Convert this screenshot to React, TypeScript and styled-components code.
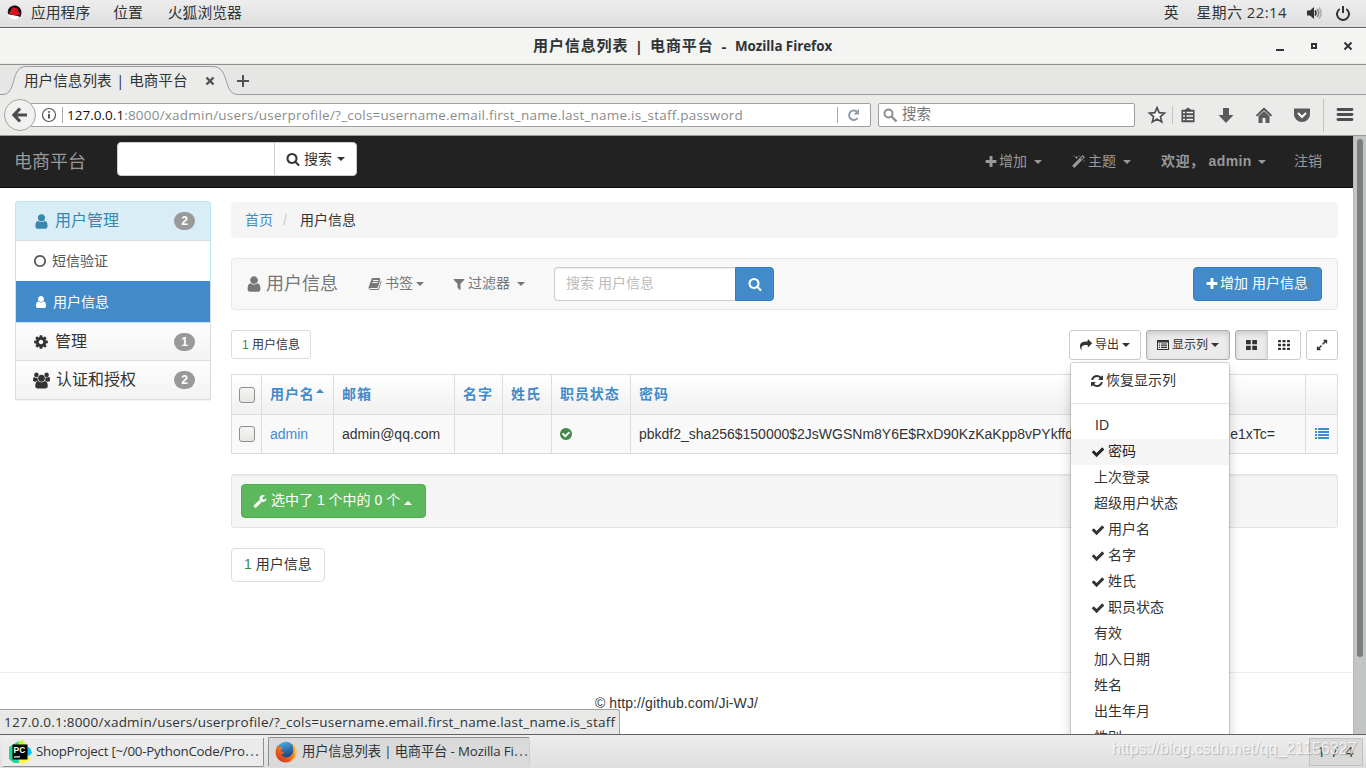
import React from "react";
import styled, { createGlobalStyle, css } from "styled-components";

const UI = `"Open Sans", "Noto Sans", "Noto Sans CJK SC", sans-serif`;
const WEB = `"Liberation Sans", "Noto Sans CJK SC", sans-serif`;

const Global = createGlobalStyle`
  *, *::before, *::after { box-sizing: border-box; }
  html, body, #root { margin: 0; padding: 0; width: 1366px; height: 768px; overflow: hidden; }
  body { background: #fff; }
`;

/* ---------- icons ---------- */

const icons = {
  user: "M1536 1399q0 109-62.5 187t-150.5 78h-854q-88 0-150.5-78t-62.5-187q0-85 8.5-160.5t31.5-152 58.5-131 94-89 134.5-34.5q131 128 313 128t313-128q76 0 134.5 34.5t94 89 58.5 131 31.5 152 8.5 160.5zm-256-887q0 159-112.5 271.5t-271.5 112.5-271.5-112.5-112.5-271.5 112.5-271.5 271.5-112.5 271.5 112.5 112.5 271.5z",
  search: "M1216 832q0-185-131.5-316.5t-316.5-131.5-316.5 131.5-131.5 316.5 131.5 316.5 316.5 131.5 316.5-131.5 131.5-316.5zm512 832q0 52-38 90t-90 38q-54 0-90-38l-343-342q-179 124-399 124-143 0-273.5-55.5t-225-150-150-225-55.5-273.5 55.5-273.5 150-225 225-150 273.5-55.5 273.5 55.5 225 150 150 225 55.5 273.5q0 220-124 399l343 343q37 37 37 90z",
  plus: "M1600 736v192q0 40-28 68t-68 28h-416v416q0 40-28 68t-68 28h-192q-40 0-68-28t-28-68v-416h-416q-40 0-68-28t-28-68v-192q0-40 28-68t68-28h416v-416q0-40 28-68t68-28h192q40 0 68 28t28 68v416h416q40 0 68 28t28 68z",
  magic: "M1190 581l293-293-107-107-293 293zm447-293q0 27-18 45l-1286 1286q-18 18-45 18t-45-18l-198-198q-18-18-18-45t18-45l1286-1286q18-18 45-18t45 18l198 198q18 18 18 45zm-1351-190l98 30-98 30-30 98-30-98-98-30 98-30 30-98zm350 162l196 60-196 60-60 196-60-196-196-60 196-60 60-196zm930 478l98 30-98 30-30 98-30-98-98-30 98-30 30-98zm-640-640l98 30-98 30-30 98-30-98-98-30 98-30 30-98z",
  book: "M1703 478q40 57 18 129l-275 906q-19 64-76.5 107.5t-122.5 43.5h-923q-77 0-148.5-53.5t-99.5-131.5q-24-67-2-127 0-4 3-27t4-37q1-8-3-21.5t-3-19.5q2-11 8-21t16.5-23.5 16.5-23.5q23-38 45-91.5t30-91.5q3-10 .5-30t-.5-28q3-11 17-28t17-23q21-36 42-92t25-90q1-9-2.5-32t.5-28q4-13 22-30.5t22-22.5q19-26 42.5-84.5t27.5-96.5q1-8-3-25.5t-2-26.5q2-8 9-18t18-23 17-21q8-12 16.5-30.5t15-35 16-36 19.5-32 26.5-23.5 36-11.5 47.5 5.5l-1 3q38-9 51-9h761q74 0 114 56t18 130l-274 906q-36 119-71.5 153.5t-128.5 34.5h-869q-27 0-38 15-11 16-1 43 24 70 144 70h923q29 0 56-15.5t35-41.5l300-987q7-22 5-57 38 15 59 43zm-1064 2q-4 13 2 22.5t20 9.5h608q13 0 25.5-9.5t16.5-22.5l21-64q4-13-2-22.5t-20-9.5h-608q-13 0-25.5 9.5t-16.5 22.5zm-83 256q-4 13 2 22.5t20 9.5h608q13 0 25.5-9.5t16.5-22.5l21-64q4-13-2-22.5t-20-9.5h-608q-13 0-25.5 9.5t-16.5 22.5z",
  filter: "M1595 295q17 41-14 70l-493 493v742q0 42-39 59-13 5-25 5-27 0-45-19l-256-256q-19-19-19-45v-486l-493-493q-31-29-14-70 17-39 59-39h1280q42 0 59 39z",
  check: "M1671 566q0 40-28 68l-724 724-136 136q-28 28-68 28t-68-28l-136-136-362-362q-28-28-28-68t28-68l136-136q28-28 68-28t68 28l294 295 656-657q28-28 68-28t68 28l136 136q28 28 28 68z",
  checkCircle: "M1412 734q0-28-18-46l-91-90q-19-19-45-19t-45 19l-408 407-226-226q-19-19-45-19t-45 19l-91 90q-18 18-18 46 0 27 18 45l362 362q19 19 45 19 27 0 46-19l543-543q18-18 18-45zm252 162q0 209-103 385.5t-279.5 279.5-385.5 103-385.5-103-279.5-279.5-103-385.5 103-385.5 279.5-279.5 385.5-103 385.5 103 279.5 279.5 103 385.5z",
  circle: "M896 352q-148 0-273 73t-198 198-73 273 73 273 198 198 273 73 273-73 198-198 73-273-73-273-198-198-273-73zm768 544q0 209-103 385.5t-279.5 279.5-385.5 103-385.5-103-279.5-279.5-103-385.5 103-385.5 279.5-279.5 385.5-103 385.5 103 279.5 279.5 103 385.5z",
  cog: "M1152 896q0-106-75-181t-181-75-181 75-75 181 75 181 181 75 181-75 75-181zm512-109v222q0 12-8 23t-20 13l-185 28q-19 54-39 91 35 50 107 138 10 12 10 25t-9 23q-27 37-99 108t-94 71q-12 0-26-9l-138-108q-44 23-91 38-16 136-29 186-7 28-36 28h-222q-14 0-24.5-8.5t-11.5-21.5l-28-184q-49-16-90-37l-141 107q-10 9-25 9-14 0-25-11-126-114-165-168-7-10-7-23 0-12 8-23 15-21 51-66.5t54-70.5q-27-50-41-99l-183-27q-13-2-21-12.5t-8-23.5v-222q0-12 8-23t19-13l186-28q14-46 39-92-40-57-107-138-10-12-10-24 0-10 9-23 26-36 98.5-107.5t94.5-71.5q13 0 26 10l138 107q44-23 91-38 16-136 29-186 7-28 36-28h222q14 0 24.5 8.5t11.5 21.5l28 184q49 16 90 37l142-107q9-9 24-9 13 0 25 10 129 119 165 170 7 8 7 22 0 12-8 23-15 21-51 66.5t-54 70.5q26 50 41 98l183 28q13 2 21 12.5t8 23.5z",
  users: "M593 896q-162 5-265 128h-134q-82 0-138-40.5t-56-118.5q0-353 124-353 6 0 43.5 21t97.5 42.5 119 21.500q67 0 133-23-5 37-5 66 0 159 93 293zm1071 637q0 120-73 189.5t-194 69.5h-874q-121 0-194-69.5t-73-189.5q0-53 3.5-103.5t14-109 26.5-108.5 43-97.5 62-81 85.5-53.5 111.5-20q10 0 43 21.5t73 48 107 48 135 21.5 135-21.5 107-48 73-48 43-21.5q61 0 111.5 20t85.5 53.5 62 81 43 97.5 26.5 108.5 14 109 3.5 103.5zm-1024-1277q0 106-75 181t-181 75-181-75-75-181 75-181 181-75 181 75 75 181zm704 384q0 159-112.5 271.5t-271.5 112.5-271.5-112.5-112.5-271.5 112.5-271.5 271.5-112.5 271.5 112.5 112.5 271.5zm576 225q0 78-56 118.5t-138 40.5h-134q-103-123-265-128 93-134 93-293 0-29-5-66 66 23 133 23 59 0 119-21.5t97.5-42.5 43.5-21q124 0 124 353zm-128-609q0 106-75 181t-181 75-181-75-75-181 75-181 181-75 181 75 75 181z",
  share: "M1792 640q0 26-19 45l-512 512q-19 19-45 19t-45-19-19-45v-256h-224q-98 0-175.5 6t-154 21.5-133 42.5-105.5 69.5-80 101-48.5 138.5-17.5 181q0 55 5 123 0 6 2.5 23.5t2.5 26.5q0 15-8.5 25t-23.5 10q-16 0-28-17-7-9-13-22t-13.5-30-10.5-24q-127-285-127-451 0-199 53-333 162-403 875-403h224v-256q0-26 19-45t45-19 45 19l512 512q19 19 19 45z",
  refresh: "M1639 1056q0 5-1 7-64 268-268 434.5t-478 166.5q-146 0-282.5-55t-243.5-157l-129 129q-19 19-45 19t-45-19-19-45v-448q0-26 19-45t45-19h448q26 0 45 19t19 45-19 45l-137 137q71 66 161 102t187 36q134 0 250-65t186-179q11-17 53-117 8-23 30-23h192q13 0 22.5 9.5t9.5 22.5zm25-800v448q0 26-19 45t-45 19h-448q-26 0-45-19t-19-45 19-45l138-138q-148-137-349-137-134 0-250 65t-186 179q-11 17-53 117-8 23-30 23h-199q-13 0-22.5-9.5t-9.5-22.5v-7q65-268 270-434.5t480-166.5q146 0 284 55.5t245 156.5l130-129q19-19 45-19t45 19 19 45z",
  wrench: "M448 1472q0-26-19-45t-45-19-45 19-19 45 19 45 45 19 45-19 19-45zm644-420l-682 682q-37 37-90 37-52 0-91-37l-106-108q-38-36-38-90 0-53 38-91l681-681q39 98 114.5 173.5t173.5 114.5zm634-435q0 39-23 106-47 134-164.5 217.5t-258.5 83.5q-185 0-316.5-131.5t-131.5-316.5 131.5-316.5 316.5-131.5q58 0 121.5 16.5t107.5 46.5q16 11 16 28t-16 28l-293 169v224l193 107q5-3 79-48.5t135.5-81 70.5-35.5q15 0 23.5 10t8.5 25z",
  expand: "M883 1056q0 13-10 23l-332 332 144 144q19 19 19 45t-19 45-45 19h-448q-26 0-45-19t-19-45v-448q0-26 19-45t45-19 45 19l144 144 332-332q10-10 23-10t23 10l114 114q10 10 10 23zm781-864v448q0 26-19 45t-45 19-45-19l-144-144-332 332q-10 10-23 10t-23-10l-114-114q-10-10-10-23t10-23l332-332-144-144q-19-19-19-45t19-45 45-19h448q26 0 45 19t19 45z",
};

const IconSvg = styled.svg<{ $ml?: number; $mr?: number }>`
  display: block;
  flex: none;
  fill: currentColor;
  overflow: visible;
  margin-left: ${(p) => p.$ml ?? 0}px;
  margin-right: ${(p) => p.$mr ?? 4}px;
`;

type IconProps = { name: keyof typeof icons; size?: number; box?: string; ml?: number; mr?: number };
const Icon = ({ name, size = 14, box = "0 0 1792 1792", ml, mr }: IconProps) => (
  <IconSvg width={size} height={size} viewBox={box} $ml={ml} $mr={mr}>
    <path d={icons[name]} />
  </IconSvg>
);

const Caret = styled.i<{ $ml?: number; $up?: boolean; $lift?: number }>`
  flex: none;
  width: 0;
  height: 0;
  margin-left: ${(p) => p.$ml ?? 4}px;
  margin-bottom: ${(p) => p.$lift ?? 0}px;
  border: 4px solid transparent;
  ${(p) =>
    p.$up
      ? css`border-top: 0; border-bottom-color: currentColor;`
      : css`border-bottom: 0; border-top-color: currentColor;`}
`;

/* Rows whose label sits one pixel above the centre line of its icon. */
const raisedLabel = css`
  padding-bottom: 2px;
  > svg, > i { position: relative; top: 1px; }
`;

/* ---------- desktop panel ---------- */

const Screen = styled.div`
  width: 1366px;
  height: 768px;
  display: flex;
  flex-direction: column;
  overflow: hidden;
  font-family: ${UI};
  color: #2e3436;
`;

const Panel = styled.header`
  flex: none;
  height: 28px;
  display: flex;
  align-items: center;
  padding: 0 15px 2px 7px;
  border-bottom: 1px solid #606261;
  background: linear-gradient(#ededed, #dedede);
  font-size: 14.8px;
  line-height: 25px;
`;

const PanelText = styled.span<{ $ml: number; $ls?: number }>`
  margin-left: ${(p) => p.$ml}px;
  letter-spacing: ${(p) => p.$ls ?? 0}px;
  white-space: nowrap;
`;

const Spacer = styled.div`
  flex: 1;
`;

const TitleBar = styled.div`
  flex: none;
  height: 37px;
  display: flex;
  align-items: center;
  padding: 0 13px 0 533px;
  border-bottom: 1px solid #8e908e;
  background: #f4f4f3;
  box-shadow: inset 0 1px #fff, inset 0 -1px #e8e8e6;
  white-space: pre;
  font-weight: 700;
`;

const TitleCjk = styled.span<{ $w: number }>`
  width: ${(p) => p.$w}px;
  font-size: 15px;
  letter-spacing: 0.9px;
  line-height: 34px;
  padding-bottom: 2px;
`;

const TitleSeparator = styled.span<{ $w: number }>`
  width: ${(p) => p.$w}px;
  font-size: 15px;
  text-align: center;
`;

const TitleLatin = styled.span`
  font-size: 13.4px;
  letter-spacing: -0.05px;
`;

const WindowButtons = styled.svg`
  display: block;
`;

/* ---------- browser chrome ---------- */

const TabStrip = styled.div`
  flex: none;
  height: 30px;
  display: flex;
  position: relative;
  background: #e6e6e4;
`;

const TabShape = styled.svg`
  position: absolute;
  inset: 0;
`;

const TabLabel = styled.div`
  position: relative;
  width: 181px;
  padding-left: 24px;
  font-size: 14.6px;
  line-height: 30px;
  word-spacing: 1px;
  white-space: pre;
`;

const TabIcons = styled.svg`
  position: relative;
  margin: 9px 0 0 24px;
`;

const NavBar = styled.div`
  flex: none;
  height: 41px;
  display: flex;
  align-items: center;
  padding: 0 0 1px 4px;
  border-bottom: 1px solid #989a98;
  background: #ebebe9;
`;

const BackButton = styled.div`
  flex: none;
  width: 32px;
  height: 32px;
  margin-right: -6px;
  position: relative;
  z-index: 1;
  display: grid;
  place-items: center;
  border: 1px solid #a2a4a2;
  border-radius: 50%;
  background: #f1f1f0;
`;

const Field = styled.div<{ $w: number; $ml?: number }>`
  flex: none;
  width: ${(p) => p.$w}px;
  margin-left: ${(p) => p.$ml ?? 0}px;
  height: 24px;
  display: flex;
  align-items: center;
  border: 1px solid #9fa19f;
  border-radius: 2px;
  background: #fff;
  font-size: 13.5px;
  white-space: nowrap;
`;

const Url = styled.span`
  margin-left: 4px;
  color: #8a8c8c;
  letter-spacing: 0.22px;
  b { font-weight: 400; color: #111; letter-spacing: 0.02px; }
`;

const SearchHint = styled.span`
  margin-left: 5px;
  padding-bottom: 2px;
  font-size: 14.5px;
  line-height: 20px;
  color: #777;
`;

const FieldRule = styled.i<{ $ml: number; $h?: number }>`
  width: 1px;
  height: ${(p) => p.$h ?? 16}px;
  margin-left: ${(p) => p.$ml}px;
  background: #aaa;
`;

const ToolbarIcons = styled.svg`
  flex: none;
  margin-left: 5px;
`;

/* ---------- web page ---------- */

const Viewport = styled.div`
  flex: none;
  height: 598px;
  display: flex;
  position: relative;
  overflow: hidden;
  background: #fff;
`;

const Page = styled.div`
  width: 1353px;
  display: flex;
  flex-direction: column;
  font-family: ${WEB};
  font-size: 14px;
  line-height: 20px;
  color: #333;
`;

const ScrollTrack = styled.div`
  width: 13px;
  padding: 3px 3px 0 4px;
  background: #c3c5c4;
  box-shadow: inset 1px 0 #b6b8b7;
`;

const ScrollThumb = styled.div`
  height: 518px;
  border-radius: 3px;
  background: #7b7d7e;
`;

const TopNav = styled.nav`
  flex: none;
  height: 52px;
  display: flex;
  align-items: center;
  padding: 0 15px 0 14px;
  border-bottom: 1px solid #080808;
  background: #222;
  color: #999;
`;

const Brand = styled.div`
  width: 103px;
  font-size: 18px;
`;

const NavSearch = styled.div`
  width: 240px;
  height: 34px;
  margin-top: -5px;
  display: flex;
  border: 1px solid #ccc;
  border-radius: 4px;
  background: #fff;
  color: #333;
`;

const NavSearchInput = styled.div`
  width: 157px;
  border-right: 1px solid #ccc;
`;

const NavSearchButton = styled.div`
  flex: 1;
  display: flex;
  align-items: center;
  padding-left: 11px;
`;

const NavItem = styled.div<{ $w: number; $bold?: boolean }>`
  width: ${(p) => p.$w}px;
  display: flex;
  align-items: center;
  padding-left: ${(p) => (p.$bold ? 15 : 14)}px;
  white-space: pre;
  font-weight: ${(p) => (p.$bold ? 700 : 400)};
  letter-spacing: ${(p) => (p.$bold ? 0.4 : 0)}px;
  ${raisedLabel}
`;

const Columns = styled.div`
  flex: none;
  height: 484px;
  display: flex;
  gap: 20px;
  padding: 13px 15px 0;
`;

const Sidebar = styled.aside`
  width: 196px;
  height: 199px;
  border: 1px solid #ddd;
  border-radius: 4px 4px 0 0;
  box-shadow: 0 1px 1px rgba(0, 0, 0, 0.05);
`;

const SideHead = styled.div<{ $h: number; $info?: boolean; $top?: string }>`
  height: ${(p) => p.$h}px;
  display: flex;
  align-items: center;
  padding: 0 15px 0 17px;
  border-top: ${(p) => (p.$top ? `1px solid ${p.$top}` : 0)};
  background: ${(p) => (p.$info ? "#d9edf7" : "linear-gradient(#fdfdfd, #f3f3f3)")};
  color: ${(p) => (p.$info ? "#3a87ad" : "#333")};
  font-size: 16px;
  ${(p) =>
    p.$info &&
    css`
      margin: -1px -1px 0;
      padding: 0 15px 0 17px;
      border: 1px solid #bce8f1;
      border-bottom: 0;
      border-radius: 4px 4px 0 0;
    `}
`;

const Badge = styled.span`
  width: 21px;
  height: 18px;
  margin-left: auto;
  border-radius: 9px;
  background: #999;
  color: #fff;
  font-size: 12px;
  font-weight: 700;
  line-height: 18px;
  text-align: center;
`;

const SideItem = styled.div<{ $active?: boolean }>`
  height: 41px;
  display: flex;
  align-items: center;
  padding-left: 17px;
  border-top: ${(p) => (p.$active ? 0 : "1px solid #ddd")};
  margin: 0 ${(p) => (p.$active ? 0 : -1)}px;
  ${(p) => !p.$active && css`border-left: 1px solid #bce8f1; border-right: 1px solid #bce8f1;`}
  background: ${(p) => (p.$active ? "#428bca" : "#fff")};
  color: ${(p) => (p.$active ? "#fff" : "#555")};
`;

const Main = styled.main`
  width: 1107px;
  padding-top: 1px;
`;

const Breadcrumb = styled.div`
  height: 36px;
  display: flex;
  align-items: center;
  padding: 0 14px 1px;
  border-radius: 4px;
  background: #f5f5f5;
  white-space: pre;
`;

const Link = styled.span`
  color: #428bca;
`;

const Slash = styled.span`
  width: 27px;
  padding-left: 10px;
  color: #ccc;
`;

const ModelBar = styled.div`
  height: 52px;
  margin-top: 20px;
  display: flex;
  align-items: center;
  padding: 0 15px 0 14px;
  border: 1px solid #e7e7e7;
  border-radius: 4px;
  background: #f8f8f8;
  color: #777;
`;

const ModelTitle = styled.div`
  width: 122px;
  display: flex;
  align-items: center;
  margin-left: -1px;
  margin-right: 1px;
  font-size: 18px;
`;

const ModelItem = styled.div<{ $w: number }>`
  width: ${(p) => p.$w}px;
  display: flex;
  align-items: center;
  ${raisedLabel}
`;

const ModelSearch = styled.div`
  width: 181px;
  height: 34px;
  padding: 5px 11px;
  border: 1px solid #ccc;
  border-right: 0;
  border-radius: 4px 0 0 4px;
  background: #fff;
  box-shadow: inset 0 1px 1px rgba(0, 0, 0, 0.075);
  color: #bbb;
  white-space: pre;
`;

const Primary = styled.div<{ $w: number; $joined?: boolean }>`
  width: ${(p) => p.$w}px;
  height: 34px;
  display: flex;
  align-items: center;
  padding-left: 11px;
  border: 1px solid #357ebd;
  border-radius: ${(p) => (p.$joined ? "0 4px 4px 0" : "4px")};
  background: #428bca;
  color: #fff;
  white-space: pre;
  ${raisedLabel}
`;

const Actions = styled.div`
  height: 30px;
  margin-top: 20px;
  display: flex;
  align-items: flex-start;
`;

const Count = styled.div<{ $large?: boolean }>`
  width: ${(p) => (p.$large ? 94 : 80)}px;
  height: ${(p) => (p.$large ? 34 : 29)}px;
  margin-top: ${(p) => (p.$large ? 20 : 0)}px;
  padding-left: ${(p) => (p.$large ? 12 : 10)}px;
  border: 1px solid #ddd;
  border-radius: ${(p) => (p.$large ? 4 : 3)}px;
  font-size: ${(p) => (p.$large ? 14 : 12)}px;
  line-height: ${(p) => (p.$large ? 31 : 29)}px;
  background: #fff;
  white-space: pre;
  b { font-weight: 400; color: #468847; }
`;

const SmallButton = styled.div<{ $w: number; $ml?: number; $on?: boolean; $edge?: "left" | "right" }>`
  position: relative;
  width: ${(p) => p.$w}px;
  height: 30px;
  margin-left: ${(p) => p.$ml ?? 5}px;
  display: flex;
  align-items: center;
  padding-left: 10px;
  border: 1px solid ${(p) => (p.$on ? "#adadad" : "#ccc")};
  border-radius: ${(p) => (p.$edge === "left" ? "3px 0 0 3px" : p.$edge === "right" ? "0 3px 3px 0" : "3px")};
  background: ${(p) => (p.$on ? "#ebebeb" : "#fff")};
  box-shadow: ${(p) => (p.$on ? "inset 0 3px 5px rgba(0,0,0,.125)" : "none")};
  font-size: 12px;
  color: #333;
`;

const Menu = styled.div`
  position: absolute;
  z-index: 5;
  top: 31px;
  left: -77px;
  width: 160px;
  height: 420px;
  padding: 5px 0;
  border: 1px solid rgba(0, 0, 0, 0.15);
  border-radius: 4px;
  background: #fff;
  background-clip: padding-box;
  box-shadow: 0 6px 12px rgba(0, 0, 0, 0.175);
  font-size: 14px;
  line-height: 20px;
`;

const MenuItem = styled.div<{ $hot?: boolean; $pad?: number }>`
  height: 26px;
  display: flex;
  align-items: center;
  padding-left: ${(p) => p.$pad ?? 20}px;
  background: ${(p) => (p.$hot ? "#f5f5f5" : "transparent")};
  color: ${(p) => (p.$hot ? "#262626" : "#333")};
  ${raisedLabel}
`;

const Divider = styled.div`
  height: 1px;
  margin: 9px 0;
  background: #e5e5e5;
`;

const Table = styled.div`
  height: 80px;
  margin-top: 14px;
  border: 1px solid #ddd;
  border-left: 0;
`;

const Row = styled.div<{ $head?: boolean }>`
  height: 39px;
  display: grid;
  grid-template-columns: 30px 72px 121px 48px 49px 79px 675px 32px;
  background: ${(p) => (p.$head ? "linear-gradient(#fff, #f0f0f0)" : "#f9f9f9")};
  border-top: ${(p) => (p.$head ? 0 : "1px solid #ddd")};
  font-weight: ${(p) => (p.$head ? 700 : 400)};
  letter-spacing: ${(p) => (p.$head ? 0.9 : 0)}px;
  color: ${(p) => (p.$head ? "#428bca" : "#333")};
`;

const Cell = styled.div<{ $check?: boolean }>`
  display: flex;
  align-items: center;
  padding: 0 0 ${(p) => (p.$check ? 0 : 1)}px 8px;
  border-left: 1px solid #ddd;
  white-space: nowrap;
`;

const Checkbox = styled.i`
  width: 16px;
  height: 16px;
  margin-left: -1px;
  border: 1px solid #8f908d;
  border-radius: 3px;
  background: linear-gradient(#f6f6f5, #e6e6e4);
`;

const HashTail = styled.span`
  margin: 0 30px 0 auto;
`;

const Well = styled.div`
  height: 54px;
  margin-top: 20px;
  padding: 9px;
  border: 1px solid #e3e3e3;
  border-radius: 3px;
  background: #f5f5f5;
  box-shadow: inset 0 1px 1px rgba(0, 0, 0, 0.05);
`;

const Success = styled.div`
  width: 185px;
  height: 34px;
  display: flex;
  align-items: center;
  padding-left: 11px;
  border: 1px solid #4cae4c;
  border-radius: 4px;
  background: #5cb85c;
  color: #fff;
  white-space: pre;
  ${raisedLabel}
`;

const Footer = styled.footer`
  flex: 1;
  padding-top: 20px;
  border-top: 1px solid #eee;
  text-align: center;
  letter-spacing: 0.1px;
`;

const StatusTip = styled.div`
  position: absolute;
  left: 0;
  bottom: 0;
  width: 620px;
  height: 25px;
  padding-left: 4px;
  border: 1px solid #a0a2a0;
  border-left: 0;
  border-bottom: 0;
  border-radius: 0 3px 0 0;
  background: #e8e8e7;
  font-size: 13.5px;
  line-height: 24px;
  letter-spacing: 0.22px;
  white-space: nowrap;
`;

/* ---------- task bar ---------- */

const TaskBar = styled.footer`
  flex: none;
  height: 34px;
  display: flex;
  position: relative;
  padding: 2px 3px 0 2px;
  border-top: 1px solid #606261;
  background: linear-gradient(#ededed, #dedede);
`;

const Task = styled.div<{ $active?: boolean }>`
  width: 262px;
  height: 30px;
  margin-right: 4px;
  display: flex;
  align-items: center;
  padding-left: ${(p) => (p.$active ? 6 : 5)}px;
  border: 1px solid;
  border-color: ${(p) => (p.$active ? "#8e908e #d0d0d0 #d8d8d8 #8e908e" : "#f6f6f6 #8e908e #8e908e #e8e8e8")};
  border-radius: 2px;
  background: ${(p) => (p.$active ? "#dadada" : "#ebebeb")};
  font-size: 13.3px;
  white-space: nowrap;
  > svg { flex: none; }
`;

const TaskText = styled.span<{ $ml: number; $ls: number }>`
  margin-left: ${(p) => p.$ml}px;
  padding-bottom: 2px;
  line-height: 20px;
  letter-spacing: ${(p) => p.$ls}px;
`;

const Dots = styled.span`
  font-family: "Noto Sans CJK SC", sans-serif;
`;

const Workspace = styled.div`
  width: 54px;
  height: 28px;
  margin: 1px 0 0 auto;
  border: 1px solid #c0c0c0;
  background: #d9d9d9;
  font-size: 15px;
  line-height: 25px;
  letter-spacing: 1.5px;
  text-align: center;
  white-space: pre;
`;

const Watermark = styled.div`
  position: absolute;
  left: 1112px;
  top: 4px;
  font-family: ${WEB};
  font-size: 16px;
  line-height: 20px;
  color: rgba(255, 255, 255, 0.75);
  text-shadow: 1px 1px 1px rgba(120, 120, 120, 0.45);
  white-space: nowrap;
`;

/* ---------- content ---------- */

const columns: Array<[string, boolean]> = [
  ["ID", false],
  ["密码", true],
  ["上次登录", false],
  ["超级用户状态", false],
  ["用户名", true],
  ["名字", true],
  ["姓氏", true],
  ["职员状态", true],
  ["有效", false],
  ["加入日期", false],
  ["姓名", false],
  ["出生年月", false],
  ["性别", false],
];

const RedHat = () => (
  <svg width="15" height="15" viewBox="0 0 15 15">
    <circle cx="7.5" cy="7.5" r="7" fill="#fff" />
    <path d="M1 9C0 5 2.5 1 7 .6c4-.3 7 2.500 7.400 6C14.600 9 14 11 13 12.300 11 10 4 10.500 1 9z" fill="#151515" />
    <path d="M2 8c.3-1.500 1-1.800 1.800-1.800C4.300 4 5 2.300 6 2.300c1 0 1.500.8 2.500.8 1.200 0 2.200.2 2.700 3 .2 1 .3 1.500 1.500 2 .8.500.3 2-1.500 2.200C8 10.600 2 10 2 8z" fill="#d8121c" />
  </svg>
);

const PanelIcons = () => (
  <svg width="45" height="16" viewBox="0 0 45 16">
    <path d="M1 5.500h3L8 2v12l-4-3.500H1z" fill="#2e3436" />
    <g fill="none" strokeWidth="1.600">
      <path d="M9 5.500q2 2.500 0 5" stroke="#2e3436" />
      <path d="M11 4q3.500 4 0 8" stroke="#888" />
      <path d="M13 2.500q4.500 5.500 0 11" stroke="#b0b0b0" />
    </g>
    <path d="M33.700 4a6 6 0 1 0 6.600 0M37 1v7" fill="none" stroke="#2e3436" strokeWidth="2" />
  </svg>
);

const PyCharm = () => (
  <svg width="24" height="24" viewBox="0 0 24 24">
    <path d="M1 7L11 1l4 3v18l-9 1-5-4z" fill="#21d789" />
    <path d="M10 2l5-2 4 7-6 5z" fill="#c8f03c" />
    <path d="M17 6l5 2 2 5-4 4-5-4z" fill="#07c3f2" />
    <path d="M6 19l14-4 3 5-9 4z" fill="#fcf84a" />
    <path d="M2 18l8-4 1 9-5 0z" fill="#21d7a0" />
    <rect x="4.500" y="4.500" width="15" height="15" fill="#000" />
    <rect x="6" y="16.300" width="6" height="1.200" fill="#fff" />
    <text x="5.600" y="12.500" fontSize="8.500" fontWeight="700" fontFamily="Liberation Sans, sans-serif" fill="#fff">PC</text>
  </svg>
);

const Firefox = () => (
  <svg width="22" height="22" viewBox="0 0 22 22">
    <defs>
      <linearGradient id="fox" x1="1" y1="0" x2="0.2" y2="1">
        <stop offset="0" stopColor="#ffcf33" />
        <stop offset="0.45" stopColor="#f58218" />
        <stop offset="1" stopColor="#d3301a" />
      </linearGradient>
      <linearGradient id="globe" x1="0" y1="0" x2="0.3" y2="1">
        <stop offset="0" stopColor="#4fb4ea" />
        <stop offset="1" stopColor="#17387f" />
      </linearGradient>
    </defs>
    <circle cx="11" cy="10" r="9.300" fill="url(#globe)" />
    <path d="M17.500 2.500c3 2.300 4.300 5.600 4 9C21 17.500 16.500 21.500 11 21.500 5 21.500.6 17 .6 11.300.6 8 1.600 5.500 3 3.700c.1 1.200.4 1.900.9 2.400 1.500-.4 3 0 4.100.9-1.800.8-2.600 2-2.300 3.300 1 .6 2.300.5 3.300 1.100-.6 1-2 1.300-2.600 2.300 1.500 2.500 4.600 3.300 7.300 2.200 3.700-1.500 5-5 4.400-8.400-.2-1.800-.5-3.300-.6-5z" fill="url(#fox)" />
    <path d="M17.500 2.500c2.800 2.600 3.700 6.500 2.500 10 1-1 .5 5-4 7" fill="none" stroke="#ffdf45" strokeWidth="1" />
  </svg>
);

const BrowserTools = () => (
  <ToolbarIcons width="226" height="40" viewBox="0 0 226 40">
    <path d="M32.500 11v18M183.500 4v33" stroke="#c4c4c3" />
    <path d="M17 12.700l2.100 5 5.400.4-4.100 3.500 1.300 5.300-4.700-2.900-4.700 2.900 1.300-5.300-4.100-3.500 5.400-.4z" fill="#fafafa" stroke="#4d4f4f" strokeWidth="1.700" />
    <path d="M42 14.800h3L48 12.500l3 2.300h3q.5 0 .5.500v11.500q0 .5-.5.500H42q-.5 0-.5-.5V15.300q0-.5.500-.5z" fill="#4d4f4f" />
    <path d="M43 17.500h2M46.500 17.500h6.500M43 21h2M46.500 21h6.500M43 24.500h2M46.500 24.500h6.500" stroke="#f2f2f2" strokeWidth="1.700" />
    <path d="M83 13h6v7h4.500L86 28l-7.500-8H83z" fill="#5a5c5c" />
    <path d="M116.500 20.800l7.500-7 7.500 7" fill="none" stroke="#4d4f4f" strokeWidth="1.800" />
    <path d="M118.500 21l5.500-5 5.500 5v7h-4v-5h-3v5h-4z" fill="#5a5c5c" />
    <path d="M154 13.500h16v6a8 7.500 0 0 1-16 0z" fill="#5a5c5c" />
    <path d="M158 18l4 4 4-4" fill="none" stroke="#fff" strokeWidth="2" />
    <path d="M198 14.500h14M198 19.500h14M198 24.500h14" stroke="#4d4f4f" strokeWidth="2.800" strokeLinecap="round" />
  </ToolbarIcons>
);

const GridGlyph = ({ n, size }: { n: number; size: number }) => {
  const gap = 1.5;
  const w = (size - gap * (n - 1)) / n;
  const h = (10 - gap * (n - 1)) / n;
  return (
    <IconSvg width={size} height={10} viewBox={`0 0 ${size} 10`}>
      {Array.from({ length: n * n }, (_, i) => (
        <rect key={i} x={(i % n) * (w + gap)} y={Math.floor(i / n) * (h + gap)} width={w} height={h} rx="0.5" />
      ))}
    </IconSvg>
  );
};

export default function App() {
  return (
    <Screen>
      <Global />
      <Panel>
        <RedHat />
        <PanelText $ml={9}>应用程序</PanelText>
        <PanelText $ml={23}>位置</PanelText>
        <PanelText $ml={25}>火狐浏览器</PanelText>
        <Spacer />
        <PanelText $ml={0}>英</PanelText>
        <PanelText $ml={18} $ls={0.5}>星期六 22:14</PanelText>
        <PanelText $ml={19} />
        <PanelIcons />
      </Panel>

      <TitleBar>
        <TitleCjk $w={95}>用户信息列表</TitleCjk>
        <TitleSeparator $w={22}>|</TitleSeparator>
        <TitleCjk $w={63}>电商平台</TitleCjk>
        <TitleSeparator $w={22}>-</TitleSeparator>
        <TitleLatin>Mozilla Firefox</TitleLatin>
        <Spacer />
        <WindowButtons width="78" height="12" viewBox="0 0 78 12">
          <path d="M1 9h8v2H1z" fill="#2e3436" />
          <path d="M37 4h4v4h-4z" fill="none" stroke="#2e3436" strokeWidth="2" />
          <path d="M69.500 2.500l7 7M76.500 2.500l-7 7" stroke="#2e3436" strokeWidth="2" />
        </WindowButtons>
      </TitleBar>

      <TabStrip>
        <TabShape width="1366" height="30" viewBox="0 0 1366 30">
          <path d="M0 29.500h3C17 29.500 10 1.500 26 1.500H212C231 1.500 222 29.500 238 29.500V30H0z" fill="#ebebe9" />
          <path d="M0 29.500h3C17 29.500 10 1.500 26 1.500H212C231 1.500 222 29.500 238 29.500H1366" fill="none" stroke="#9a9c9e" />
        </TabShape>
        <TabLabel>用户信息列表 | 电商平台</TabLabel>
        <TabIcons width="46" height="14" viewBox="0 0 46 14">
          <path d="M1.500 3.500l7 7M8.500 3.500l-7 7" stroke="#505253" strokeWidth="2.400" />
          <path d="M32 7h12M38 1v12" stroke="#505253" strokeWidth="2" />
        </TabIcons>
      </TabStrip>

      <NavBar>
        <BackButton>
          <svg width="16" height="16" viewBox="0 0 16 16">
            <path d="M8 1.500L2 8l6 6.500M2.500 8H15" fill="none" stroke="#4d4f4f" strokeWidth="3.200" />
          </svg>
        </BackButton>
        <Field $w={841}>
          <svg width="26" height="16" viewBox="0 0 26 16">
            <circle cx="18" cy="8" r="6.500" fill="none" stroke="#555" strokeWidth="1.200" />
            <path d="M18 7v4.500M18 4.200v1.600" stroke="#444" strokeWidth="1.800" />
          </svg>
          <FieldRule $ml={5} />
          <Url><b>127.0.0.1</b>:8000/xadmin/users/userprofile/?_cols=username.email.first_name.last_name.is_staff.password</Url>
          <Spacer />
          <FieldRule $ml={0} />
          <svg width="32" height="16" viewBox="0 0 32 16">
            <path d="M19.500 11.200A4.700 4.700 0 1 1 19 4.800" fill="none" stroke="#8c9cab" strokeWidth="2" />
            <path d="M21 2v5.500h-5.500z" fill="#8c9cab" />
          </svg>
        </Field>
        <Field $w={257} $ml={7}>
          <svg width="18" height="16" viewBox="0 0 18 16">
            <circle cx="9.500" cy="6.500" r="4" fill="none" stroke="#8e8e8e" strokeWidth="2" />
            <path d="M12.500 9.500l5 5" stroke="#8e8e8e" strokeWidth="2.400" />
          </svg>
          <SearchHint>搜索</SearchHint>
        </Field>
        <BrowserTools />
      </NavBar>

      <Viewport>
        <Page>
          <TopNav>
            <Brand>电商平台</Brand>
            <NavSearch>
              <NavSearchInput />
              <NavSearchButton>
                <Icon name="search" />搜索<Caret $ml={5} />
              </NavSearchButton>
            </NavSearch>
            <Spacer />
            <NavItem $w={87}><Icon name="plus" mr={1} />增加<Caret $ml={7} /></NavItem>
            <NavItem $w={89}><Icon name="magic" ml={1} mr={2} />主题<Caret $ml={7} /></NavItem>
            <NavItem $w={134} $bold>欢迎， admin<Caret $ml={6} /></NavItem>
            <NavItem $w={58}>注销</NavItem>
          </TopNav>

          <Columns>
            <Sidebar>
              <SideHead $h={39} $info><Icon name="user" size={17} mr={5} />用户管理<Badge>2</Badge></SideHead>
              <SideItem><Icon name="circle" size={14} mr={5} />短信验证</SideItem>
              <SideItem $active><Icon name="user" size={14} ml={1} mr={5} />用户信息</SideItem>
              <SideHead $h={38} $top="#bce8f1"><Icon name="cog" size={16} mr={6} />管理<Badge>1</Badge></SideHead>
              <SideHead $h={39} $top="#ddd"><Icon name="users" size={17} box="0 0 1920 1792" mr={6} />认证和授权<Badge>2</Badge></SideHead>
            </Sidebar>

            <Main>
              <Breadcrumb>
                <Link>首页</Link><Slash>/</Slash>用户信息
              </Breadcrumb>

              <ModelBar>
                <ModelTitle><Icon name="user" size={18} mr={3} />用户信息</ModelTitle>
                <ModelItem $w={85}><Icon name="book" mr={3} />书签<Caret $ml={3} /></ModelItem>
                <ModelItem $w={101}><Icon name="filter" ml={-1} mr={2} />过滤器<Caret $ml={7} /></ModelItem>
                <ModelSearch>搜索 用户信息</ModelSearch>
                <Primary $w={39} $joined><Icon name="search" ml={1} /></Primary>
                <Spacer />
                <Primary $w={129}><Icon name="plus" mr={1} />增加 用户信息</Primary>
              </ModelBar>

              <Actions>
                <Count><b>1</b> 用户信息</Count>
                <Spacer />
                <SmallButton $w={72}><Icon name="share" size={12} mr={3} />导出<Caret $ml={3} /></SmallButton>
                <SmallButton $w={84} $on>
                  <IconSvg width="12" height="10" viewBox="0 0 12 10" $mr={3}>
                    <path d="M0 0h12v10H0zM1 2.500V9h10V2.500z" fillRule="evenodd" />
                    <path d="M2 3.500h1v1H2zM4 3.500h6v1H4zM2 5.300h1v1H2zM4 5.300h6v1H4zM2 7.100h1v1H2zM4 7.100h6v1H4z" />
                  </IconSvg>
                  显示列<Caret $ml={3} />
                  <Menu>
                    <MenuItem $pad={19}><Icon name="refresh" mr={2} />恢复显示列</MenuItem>
                    <Divider />
                    {columns.map(([label, on]) => (
                      <MenuItem key={label} $hot={label === "密码"} $pad={on ? 20 : label === "ID" ? 24 : 23}>
                        {on && <Icon name="check" mr={3} />}
                        {label}
                      </MenuItem>
                    ))}
                  </Menu>
                </SmallButton>
                <SmallButton $w={33} $on $edge="left"><GridGlyph n={2} size={11} /></SmallButton>
                <SmallButton $w={34} $ml={-1} $edge="right"><GridGlyph n={3} size={12} /></SmallButton>
                <SmallButton $w={32}><Icon name="expand" size={12} ml={-1} /></SmallButton>
              </Actions>

              <Table>
                <Row $head>
                  <Cell $check><Checkbox /></Cell>
                  <Cell>用户名<Caret $up $ml={1} $lift={6} /></Cell>
                  <Cell>邮箱</Cell>
                  <Cell>名字</Cell>
                  <Cell>姓氏</Cell>
                  <Cell>职员状态</Cell>
                  <Cell>密码</Cell>
                  <Cell />
                </Row>
                <Row>
                  <Cell $check><Checkbox /></Cell>
                  <Cell><Link>admin</Link></Cell>
                  <Cell>admin@qq.com</Cell>
                  <Cell />
                  <Cell />
                  <Cell>
                    <IconSvg width="14" height="14" viewBox="0 0 1792 1792" color="#468847" $ml={-1}>
                      <path d={icons.checkCircle} />
                    </IconSvg>
                  </Cell>
                  <Cell>
                    pbkdf2_sha256$150000$2JsWGSNm8Y6E$RxD90KzKaKpp8vPYkffd
                    <HashTail>e1xTc=</HashTail>
                  </Cell>
                  <Cell>
                    <IconSvg width="14" height="11" viewBox="0 0 14 11" color="#428bca" $ml={1}>
                      <path d="M0 0h2v2H0zM3 0h11v2H3zM0 3h2v2H0zM3 3h11v2H3zM0 6h2v2H0zM3 6h11v2H3zM0 9h2v2H0zM3 9h11v2H3z" />
                    </IconSvg>
                  </Cell>
                </Row>
              </Table>

              <Well>
                <Success><Icon name="wrench" mr={4} />选中了 1 个中的 0 个<Caret $up $lift={-3} /></Success>
              </Well>

              <Count $large><b>1</b> 用户信息</Count>
            </Main>
          </Columns>

          <Footer>© http://github.com/Ji-WJ/</Footer>
        </Page>
        <ScrollTrack><ScrollThumb /></ScrollTrack>
        <StatusTip>127.0.0.1:8000/xadmin/users/userprofile/?_cols=username.email.first_name.last_name.is_staff</StatusTip>
      </Viewport>

      <TaskBar>
        <Task><PyCharm /><TaskText $ml={4} $ls={-0.25}>ShopProject [~/00-PythonCode/Pro<Dots>…</Dots></TaskText></Task>
        <Task $active><Firefox /><TaskText $ml={5} $ls={-0.15}>用户信息列表 | 电商平台 - Mozilla Fi<Dots>…</Dots></TaskText></Task>
        <Workspace>1 / 4</Workspace>
        <Watermark>https://blog.csdn.net/qq_21156327</Watermark>
      </TaskBar>
    </Screen>
  );
}
